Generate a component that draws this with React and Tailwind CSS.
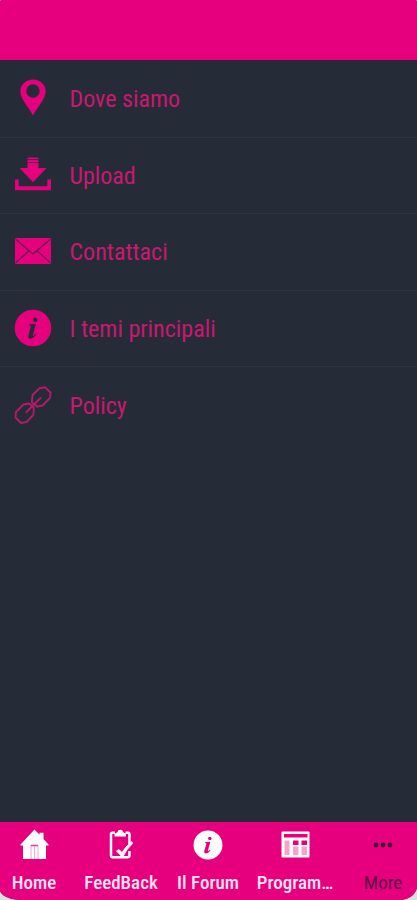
/* ===== ICONS ===== */
const PinIcon = () => (
  <svg width="26" height="37" viewBox="0 0 26 37" fill="#e6007e">
    <path
      fillRule="evenodd"
      d="M13 0.500C20 0.500 25.700 5.800 25.700 12.500C25.700 20 17.500 27.500 13 36.500C8.500 27.500 0.300 20 0.300 12.500C0.300 5.800 6 0.500 13 0.500ZM13 5.300A6.700 6.700 0 1 0 13 18.700A6.700 6.700 0 1 0 13 5.300Z"
    />
  </svg>
);

const UploadIcon = () => (
  <svg width="38" height="34" viewBox="0 0 38 34" fill="#e6007e">
    <path d="M13.500 0.500h11v1.600h-11zM13.500 2.800h11v2.200h-11z" />
    <path d="M13.500 5.700h11v5.300h8L19 25.300L5.500 11h8z" />
    <path d="M1 22.500h3.700v6.800h28.600v-6.800H37V33.300H1z" />
  </svg>
);

const MailIcon = () => (
  <svg width="38" height="28" viewBox="0 0 38 28">
    <rect x="1" y="1" width="36" height="26" rx="1.500" fill="#e6007e" />
    <path
      d="M2 2.500L15.500 14L19 17L22.500 14L36 2.500M2 25.500L15 13.800M36 25.500L23 13.800"
      fill="none"
      stroke="#5c1c4c"
      strokeWidth="1.200"
    />
  </svg>
);

const InfoIcon = ({ size, fill, glyph }) => (
  <svg width={size} height={size} viewBox="0 0 38 38">
    <circle cx="19" cy="19" r="18.300" fill={fill} />
    <g fill={glyph}>
      <circle cx="21.300" cy="10.800" r="2.200" />
      <path d="M15.200 15.600L22 14.800L18.800 26.200C18.500 27.500 19.400 27.300 21.500 24.700L22.300 25.300C20 28.700 18.200 29.700 16.300 29.700C14.500 29.700 13.800 28.500 14.300 26.700L16.700 18C17 16.700 16.700 16.500 15 16.500Z" />
    </g>
  </svg>
);

const LinkIcon = () => (
  <svg
    width="38"
    height="38"
    viewBox="0 0 38 38"
    fill="none"
    stroke="#b31a6c"
    strokeWidth="1.900"
    strokeLinejoin="round"
  >
    <path d="M18 14.500L18.500 9L25.500 2.200L31 1.200L36.500 6.500L36 12L28.500 19.500L23 20.500L18 16.500Z" />
    <path d="M19.800 23.500L19.300 29L12.500 36L7 37L1.500 31.500L2 26L9.500 18.500L15 17.500L19.800 21.500Z" />
    <path d="M12.500 26L26.500 12" strokeLinecap="round" />
  </svg>
);

const HomeIcon = () => (
  <svg width="29" height="31" viewBox="0 0 29 31" fill="#fff">
    <path d="M14.500 0.500L19.500 5.800V3.800H23.500V10L28.500 15.500V16.500H26V30H3V16.500H0.500V15.500Z" />
    <path
      d="M11 30V16.500H18V30M14.500 17V30"
      fill="none"
      stroke="#f6acd1"
      strokeWidth="1.100"
    />
    <path d="M11 16.500H18" stroke="#e6409a" strokeWidth="1.400" />
  </svg>
);

const ClipboardIcon = () => (
  <svg width="24" height="31" viewBox="0 0 24 31" fill="none" stroke="#fff">
    <path
      d="M6 3.800H3.500Q2 3.800 2 5.500V26.500Q2 28.300 3.800 28.300H18.500Q20.500 28.300 20.500 26.300V22M20.500 15V5.500Q20.500 3.800 19 3.800H16.500"
      strokeWidth="2.500"
    />
    <path
      d="M5.500 7.500V4.500Q7.500 4 8.500 3Q9 0.800 11.300 0.800Q13.600 0.800 14.200 3Q15 4 17 4.500V7.500Z"
      fill="#fff"
      stroke="none"
    />
    <path
      d="M7.500 22L10 20.500L13 23.500Q16 18 23 12.500L23.500 14.500Q17.500 20 13.500 28.500Z"
      fill="#fff"
      strokeWidth="0.800"
    />
  </svg>
);

const TableIcon = () => (
  <svg width="29" height="27" viewBox="0 0 29 27">
    <rect x="0.500" y="0.500" width="28" height="26" rx="1" fill="#fff" />
    <rect x="3" y="3" width="23.500" height="3.500" fill="#e6007e" />
    <rect x="3.500" y="9.500" width="5" height="14.500" fill="#f5a3cd" />
    <rect x="12" y="9.500" width="5.500" height="4.500" fill="#e6007e" />
    <rect x="20.500" y="9.500" width="5.500" height="4.500" fill="#e6007e" />
    <rect x="12" y="15.500" width="5.500" height="8.500" fill="#f5a3cd" />
    <rect x="20.500" y="15.500" width="5.500" height="8.500" fill="#f5a3cd" />
  </svg>
);

const DotsIcon = () => (
  <svg width="20" height="6" viewBox="0 0 20 6" fill="#3b1838">
    <circle cx="3" cy="3" r="2.400" />
    <circle cx="10" cy="3" r="2.400" />
    <circle cx="17" cy="3" r="2.400" />
  </svg>
);

const MENU = [
  { label: "Dove siamo", icon: <PinIcon /> },
  { label: "Upload", icon: <UploadIcon /> },
  { label: "Contattaci", icon: <MailIcon /> },
  { label: "I temi principali", icon: <InfoIcon size={38} fill="#e6007e" glyph="#262b38" /> },
  { label: "Policy", icon: <LinkIcon /> },
];

const TABS = [
  { label: "Home", icon: <HomeIcon /> },
  { label: "FeedBack", icon: <ClipboardIcon /> },
  { label: "Il Forum", icon: <InfoIcon size={30} fill="#fff" glyph="#e6007e" /> },
  { label: "Program…", icon: <TableIcon /> },
  { label: "More", icon: <DotsIcon />, dark: true },
];

export default function App() {
  return (
    <div className="h-[900px] w-[417px] overflow-hidden bg-[#dedede] font-['Roboto_Condensed',Roboto,sans-serif] [font-stretch:75%]">
      <div className="flex h-full flex-col overflow-hidden rounded-t-[2px] rounded-br-[18px_14px] rounded-bl-[22px_10px] bg-[#262b38]">
        <header className="h-[60px] shrink-0 bg-[#e6007e]" />

        {/* ===== MENU ===== */}
        <ul className="flex-1 pt-px">
          {MENU.map((item) => (
            <MenuRow key={item.label} {...item} />
          ))}
        </ul>

        {/* ===== TAB BAR ===== */}
        <nav className="grid h-[78px] shrink-0 grid-cols-[68px_106px_68px_106px_69px] bg-[#e6007e]">
          {TABS.map((tab) => (
            <Tab key={tab.label} {...tab} />
          ))}
        </nav>
      </div>
    </div>
  );
}

/* ===== MENU ROW ===== */
const MenuRow = ({ icon, label }) => (
  <li className="flex h-[76.600px] items-center border-b border-[#2e3341] pl-[14px] last:border-b-0">
    <span className="flex w-[38px] justify-center pb-[2px]">{icon}</span>
    <span className="ml-[17.500px] pt-px text-[24px] leading-none whitespace-nowrap text-[#c9186f]">
      {label}
    </span>
  </li>
);

/* ===== TAB ===== */
const Tab = ({ icon, label, dark }) => (
  <a className="flex flex-col items-center pt-[7px]">
    <span className="flex h-[31px] items-center">{icon}</span>
    <span
      className={`mt-3 text-[19px] leading-[21px] whitespace-nowrap ${
        dark ? "pl-px font-normal text-[#5e1145]" : "font-medium text-[#ffe3f1]"
      }`}
    >
      {label}
    </span>
  </a>
);
